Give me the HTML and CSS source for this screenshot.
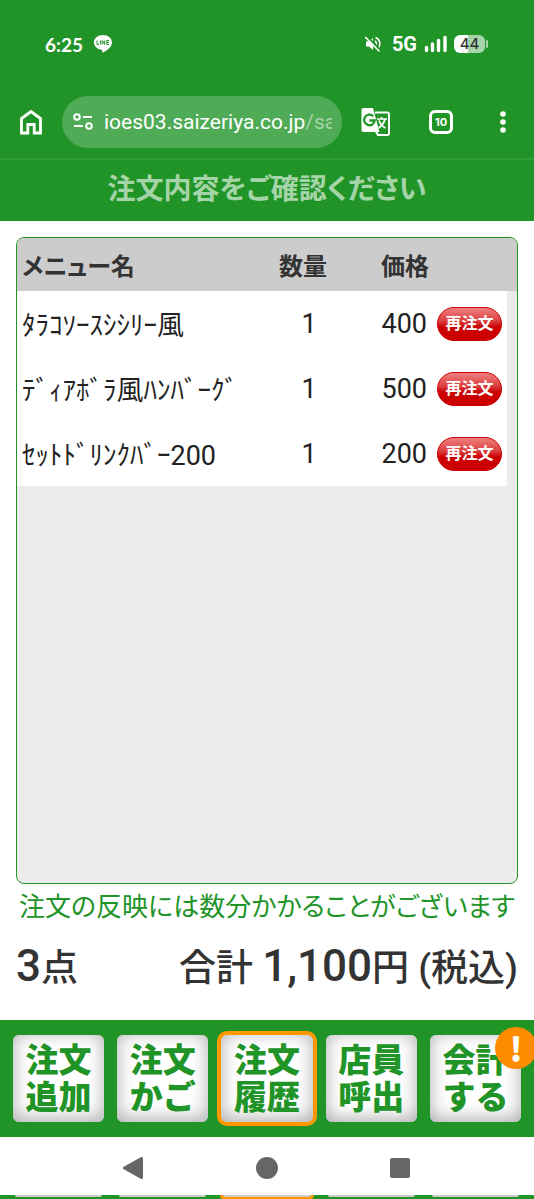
FILE: index.html
```html
<!DOCTYPE html>
<html lang="ja">
<head>
  <meta charset="UTF-8">
  <meta name="viewport" content="width=device-width, initial-scale=1">
  <title>注文履歴</title>
  <link rel="stylesheet" href="styles.css">
</head>
<body>

<div class="status-bar">
  <span class="clock">6:25</span>
  <svg class="line-icon" width="20" height="20" viewBox="0 0 20 20">
    <path d="M10 1C4.800 1 1 4.300 1 8.500c0 3.700 3.200 6.700 7.500 7.300 1 .2.800.8.700 2.400 0 .4.300.6.800.3C13 17 19 13.500 19 8.500 19 4.300 15.200 1 10 1z" fill="#fff"/>
    <path d="M4 6.500v4h2M7.500 6.500v4M9.200 10.500v-4l2.500 4v-4M16 6.500h-2.200v4H16M13.800 8.500H16" fill="none" stroke="#219428" stroke-width="1"/>
  </svg>
  <span class="spacer"></span>
  <svg class="mute-icon" width="18" height="18" viewBox="0 0 18 18">
    <path d="M2 6.500h3l4-3.500v12l-4-3.500H2z" fill="#fff"/>
    <path d="M11 6c1.500 1 1.800 3.500.5 5.500M11.500 2.500c4.500 1.500 5.500 7 3 10.500" fill="none" stroke="#fff" stroke-width="1.600"/>
    <path d="M2.500 1L17 15.500" stroke="#219428" stroke-width="2"/>
    <path d="M1.200 2L15.500 16.500" stroke="#fff" stroke-width="1.700"/>
  </svg>
  <span class="network">5G</span>
  <svg class="signal-icon" width="24" height="18" viewBox="0 0 24 18">
    <path d="M2.500 12.500v3M8.500 9v6.500M14.500 5.500v10M21 2.500v13" stroke="#fff" stroke-width="3.400" stroke-linecap="round"/>
  </svg>
  <span class="battery">44</span>
</div>

<div class="toolbar">
  <button class="icon-button" aria-label="ホーム">
    <svg width="24" height="26" viewBox="0 0 24 26">
      <path d="M2.500 24V9.500L12 2.500l9.500 7V24h-6.300v-8.500H8.800V24z" fill="none" stroke="#fff" stroke-width="2.800"/>
    </svg>
  </button>
  <div class="address">
    <svg width="20" height="18" viewBox="0 0 20 18">
      <g fill="none" stroke="#fff" stroke-width="2">
        <circle cx="4" cy="4" r="2.800"/><path d="M10 4h9M1 13h9"/><circle cx="16" cy="13" r="2.800"/>
      </g>
    </svg>
    <span class="url">ioes03.saizeriya.co.jp<span class="path">/sa</span></span>
  </div>
  <button class="icon-button translate" aria-label="翻訳">
    <svg width="30" height="30" viewBox="0 0 30 30">
      <path d="M14 5.500h12.500a1.500 1.500 0 0 1 1.500 1.500v19.500a1.500 1.500 0 0 1-1.500 1.500H17l-3-5" fill="none" stroke="#fff" stroke-width="2"/>
      <path d="M2.500 1h9.500l6.500 24H2.500A2 2 0 0 1 .5 23V3a2 2 0 0 1 2-2z" fill="#fff"/>
      <path d="M12.200 9.200a5.300 5.300 0 1 0 1.500 4.300H8.500" fill="none" stroke="#219428" stroke-width="2.300"/>
      <path d="M16 12h10M20.500 10v2M24 12c-.8 4-3.500 7-6.500 9M18 13.500c1 3 3.500 6 6.500 7.500" fill="none" stroke="#fff" stroke-width="1.700"/>
    </svg>
  </button>
  <button class="icon-button" aria-label="タブ"><span class="tab-count">10</span></button>
  <button class="icon-button menu" aria-label="メニュー">
    <svg width="6" height="24" viewBox="0 0 6 24" fill="#fff">
      <circle cx="3" cy="4" r="2.800"/><circle cx="3" cy="12" r="2.800"/><circle cx="3" cy="20" r="2.800"/>
    </svg>
  </button>
</div>

<h1>注文内容をご確認ください</h1>

<main>
  <div class="order-list">
    <table>
      <thead>
        <tr><th class="name">メニュー名</th><th class="count">数量</th><th class="price">価格</th><th class="action"></th><th class="edge"></th></tr>
      </thead>
      <tbody>
        <tr><td class="name">ﾀﾗｺｿｰｽｼｼﾘｰ風</td><td class="count">1</td><td class="price">400</td><td class="action"><button class="reorder">再注文</button></td><td class="edge"></td></tr>
        <tr><td class="name">ﾃﾞｨｱﾎﾞﾗ風ﾊﾝﾊﾞｰｸﾞ</td><td class="count">1</td><td class="price">500</td><td class="action"><button class="reorder">再注文</button></td><td class="edge"></td></tr>
        <tr><td class="name">ｾｯﾄﾄﾞﾘﾝｸﾊﾞｰ200</td><td class="count">1</td><td class="price">200</td><td class="action"><button class="reorder">再注文</button></td><td class="edge"></td></tr>
      </tbody>
    </table>
  </div>
  <p class="note">注文の反映には数分かかることがございます</p>
  <div class="total">
    <span><b>3</b>点</span>
    <span>合計 <b>1,100</b>円 (税込)</span>
  </div>
</main>

<nav class="menu-bar">
  <button>注文<br>追加</button>
  <button>注文<br>かご</button>
  <button class="active">注文<br>履歴</button>
  <button>店員<br>呼出</button>
  <button>会計<br>する<span class="badge">!</span></button>
</nav>

<div class="system-bar">
  <button aria-label="戻る">
    <svg width="22" height="24" viewBox="0 0 22 24"><path d="M19.500 2.500v19L2.500 12z" fill="#666" stroke="#666" stroke-width="3" stroke-linejoin="round"/></svg>
  </button>
  <button aria-label="ホーム画面">
    <svg width="22" height="22" viewBox="0 0 22 22"><circle cx="11" cy="11" r="11" fill="#666"/></svg>
  </button>
  <button aria-label="履歴">
    <svg width="20" height="20" viewBox="0 0 20 20"><rect width="20" height="20" rx="2" fill="#666"/></svg>
  </button>
</div>

<div class="strip"><i></i><i></i><i class="active"></i><i></i><i></i></div>

</body>
</html>
```

FILE: styles.css
```css
* {
  box-sizing: border-box;
}

body {
  margin: 0;
  min-height: 100vh;
  display: flex;
  flex-direction: column;
  font-family: Roboto, "Noto Sans CJK JP", sans-serif;
  color: #333;
  background: #fff;
}

button {
  padding: 0;
  border: none;
  background: none;
  font-family: inherit;
  cursor: pointer;
}

svg {
  display: block;
  flex: none;
}

/* status bar */
.status-bar {
  display: flex;
  align-items: center;
  height: 88px;
  padding: 0 46px 0 45px;
  background: #219428;
  color: #fff;
  font-family: Lato, sans-serif;
  font-size: 19px;
  font-weight: bold;
}

.line-icon {
  margin-left: 10px;
}

.spacer {
  flex: 1;
}

.network {
  margin: 0 7px 0 10px;
  font-family: Roboto, sans-serif;
  font-size: 20px;
}

.battery {
  position: relative;
  width: 31px;
  height: 18px;
  margin: 0 3px 0 6px;
  border-radius: 6px;
  background: linear-gradient(90deg, #fff 45%, #a6d4a9 45%);
  color: #333;
  font-family: Inter, sans-serif;
  font-size: 15px;
  font-weight: 500;
  line-height: 18px;
  text-align: center;
}

.battery::after {
  content: "";
  position: absolute;
  left: 32px;
  top: 5px;
  width: 2px;
  height: 8px;
  border-radius: 1px;
  background: #a6d4a9;
}

/* browser toolbar */
.toolbar {
  display: flex;
  align-items: center;
  height: 72px;
  padding: 2px 28px 4px 19px;
  border-bottom: 2px solid #319c38;
  background: #219428;
}

.address {
  display: flex;
  align-items: center;
  flex: 1;
  gap: 11px;
  min-width: 0;
  height: 52px;
  margin-left: 19px;
  padding: 0 10px 0 11px;
  border-radius: 26px;
  background: #4fab55;
  color: #fff;
}

.url {
  flex: 1;
  overflow: hidden;
  white-space: nowrap;
  font-size: 21px;
}

.path {
  color: #a7d5aa;
}

.translate {
  margin: 0 38px 0 19px;
}

.tab-count {
  display: block;
  width: 24px;
  height: 24px;
  border: 3px solid #fff;
  border-radius: 6px;
  color: #fff;
  font-family: Inter, sans-serif;
  font-size: 11px;
  font-weight: bold;
  line-height: 18px;
}

.menu {
  margin-left: 47px;
}

/* page */
h1 {
  margin: 0;
  height: 61px;
  background: #219428;
  color: #a6d4a9;
  font-size: 28px;
  line-height: 60px;
  text-align: center;
  font-feature-settings: "palt";
}

main {
  flex: 1;
  display: flex;
  flex-direction: column;
  padding: 16px 16px 0;
}

.order-list {
  flex: 1;
  border: 1px solid #219428;
  border-radius: 8px;
  background: #ececec;
  overflow: hidden;
}

table {
  width: 100%;
  table-layout: fixed;
  border-collapse: collapse;
}

th {
  height: 53px;
  padding: 0;
  background: #ccc;
  font-size: 24px;
  white-space: nowrap;
  font-feature-settings: "palt";
}

td {
  height: 65px;
  padding: 0;
  background: #fff;
  color: #222;
  font-size: 27px;
}

.name {
  padding-left: 5px;
  text-align: left;
  white-space: nowrap;
}

.count {
  width: 84px;
  text-align: center;
}

th.count {
  padding-right: 12px;
}

.price {
  width: 76px;
  text-align: right;
}

th.price {
  text-align: left;
  padding-left: 30px;
}

.action {
  width: 80px;
  padding-left: 10px;
}

.edge {
  width: 10px;
}

td.edge {
  background: #ececec;
}

.reorder {
  display: block;
  width: 65px;
  height: 34px;
  border: 1px solid #c00;
  border-radius: 17px;
  background: linear-gradient(#f08080, #dc4040 40%, #c00 60%);
  color: #fff;
  font-size: 16px;
  font-weight: bold;
  line-height: 30px;
}

.note {
  margin: 0;
  color: #219428;
  font-size: 26px;
  line-height: 46px;
  text-align: center;
  white-space: nowrap;
  font-feature-settings: "palt";
}

.total {
  display: flex;
  justify-content: space-between;
  height: 90px;
  font-size: 37px;
  font-weight: 500;
  line-height: 72px;
  white-space: nowrap;
}

.total b {
  font-size: 44px;
  font-weight: 500;
}

/* bottom menu */
.menu-bar {
  display: grid;
  grid-template-columns: repeat(5, 1fr);
  gap: 13px;
  padding: 15px 13px;
  background: #219428;
}

.menu-bar button {
  position: relative;
  height: 87px;
  border-radius: 6px;
  background: #fff;
  box-shadow: inset 0 -3px 18px #aaa;
  color: #219428;
  font-size: 33px;
  font-weight: 900;
  line-height: 37px;
}

.menu-bar .active {
  box-shadow: inset 0 -3px 18px #aaa, 0 0 0 4px #ff9800;
}

.badge {
  position: absolute;
  top: -8px;
  right: -16px;
  width: 42px;
  height: 42px;
  border-radius: 50%;
  background: #ff8c00;
  color: #fff;
  font-family: "Noto Sans CJK JP", sans-serif;
  line-height: 42px;
}

.system-bar {
  display: flex;
  justify-content: space-around;
  align-items: center;
  height: 58px;
  padding: 4px 68px 0 66px;
}

.strip {
  display: grid;
  grid-template-columns: repeat(5, 1fr);
  gap: 17px;
  height: 4px;
  padding: 0 15px;
  background: #219428;
  overflow: hidden;
}

.strip i {
  height: 2px;
  border-radius: 0 0 4px 4px;
  background: #ccc;
}

.strip .active {
  box-shadow: 0 0 0 3px #ff9800;
}
```
